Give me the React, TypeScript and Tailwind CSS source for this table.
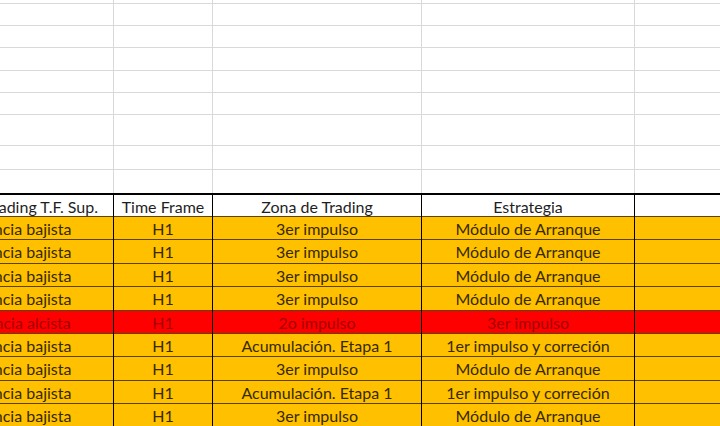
const emptyRows = [4, 22, 22, 23, 22, 22, 31, 24, 24];

interface Row {
  tendencia: string;
  tf: string;
  zona: string;
  estrategia: string;
  alert?: boolean;
}

const rows: Row[] = [
  { tendencia: "Tendencia bajista", tf: "H1", zona: "3er impulso", estrategia: "Módulo de Arranque" },
  { tendencia: "Tendencia bajista", tf: "H1", zona: "3er impulso", estrategia: "Módulo de Arranque" },
  { tendencia: "Tendencia bajista", tf: "H1", zona: "3er impulso", estrategia: "Módulo de Arranque" },
  { tendencia: "Tendencia bajista", tf: "H1", zona: "3er impulso", estrategia: "Módulo de Arranque" },
  { tendencia: "Tendencia alcista", tf: "H1", zona: "2o impulso", estrategia: "3er impulso", alert: true },
  { tendencia: "Tendencia bajista", tf: "H1", zona: "Acumulación. Etapa 1", estrategia: "1er impulso y correción" },
  { tendencia: "Tendencia bajista", tf: "H1", zona: "3er impulso", estrategia: "Módulo de Arranque" },
  { tendencia: "Tendencia bajista", tf: "H1", zona: "Acumulación. Etapa 1", estrategia: "1er impulso y correción" },
  { tendencia: "Tendencia bajista", tf: "H1", zona: "3er impulso", estrategia: "Módulo de Arranque" },
];

const cols = "grid grid-cols-[183px_99px_209px_213px_1fr]";

export default function App() {
  return (
    <div className="w-[720px] h-[426px] overflow-hidden bg-white font-['Lato',sans-serif] text-[16px]">
      <div className="ml-[-69px] w-[789px]">
        {/* empty sheet rows */}
        {emptyRows.map((h, i) => (
          <div
            key={i}
            className={`${cols} border-b border-[#d9d9d9]`}
            style={{ height: h }}
          >
            <div className="border-r border-[#d9d9d9]" />
            <div className="border-r border-[#d9d9d9]" />
            <div className="border-r border-[#d9d9d9]" />
            <div className="border-r border-[#d9d9d9]" />
            <div />
          </div>
        ))}

        {/* header */}
        <div className={`${cols} h-[23px] border-t-2 border-black text-[#1f1f1f] -mt-px`}>
          <div className="border-r-[1.5px] border-black flex items-center justify-center pr-[21px] pb-[2px] whitespace-nowrap">Zona de Trading T.F. Sup.</div>
          <div className="border-r-[1.5px] border-black flex items-center justify-center pb-[2px]">Time Frame</div>
          <div className="border-r-[1.5px] border-black flex items-center justify-center pb-[2px]">Zona de Trading</div>
          <div className="border-r-[1.5px] border-black flex items-center justify-center pb-[2px]">Estrategia</div>
          <div />
        </div>

        {/* data */}
        {rows.map((r, i) => (
          <div
            key={i}
            className={`${cols} h-[23.4px] border-t border-[#5a4500] ${
              r.alert ? "bg-[#ff0000] text-[#a30000]" : "bg-[#ffc000] text-[#362a00]"
            }`}
          >
            <div className="border-r-[1.5px] border-black flex items-center justify-center pr-[21px] pb-[2px] whitespace-nowrap">{r.tendencia}</div>
            <div className="border-r-[1.5px] border-black flex items-center justify-center pb-[2px]">{r.tf}</div>
            <div className="border-r-[1.5px] border-black flex items-center justify-center pb-[2px] whitespace-nowrap">{r.zona}</div>
            <div className="border-r-[1.5px] border-black flex items-center justify-center pb-[2px] whitespace-nowrap">{r.estrategia}</div>
            <div />
          </div>
        ))}
      </div>
    </div>
  );
}
